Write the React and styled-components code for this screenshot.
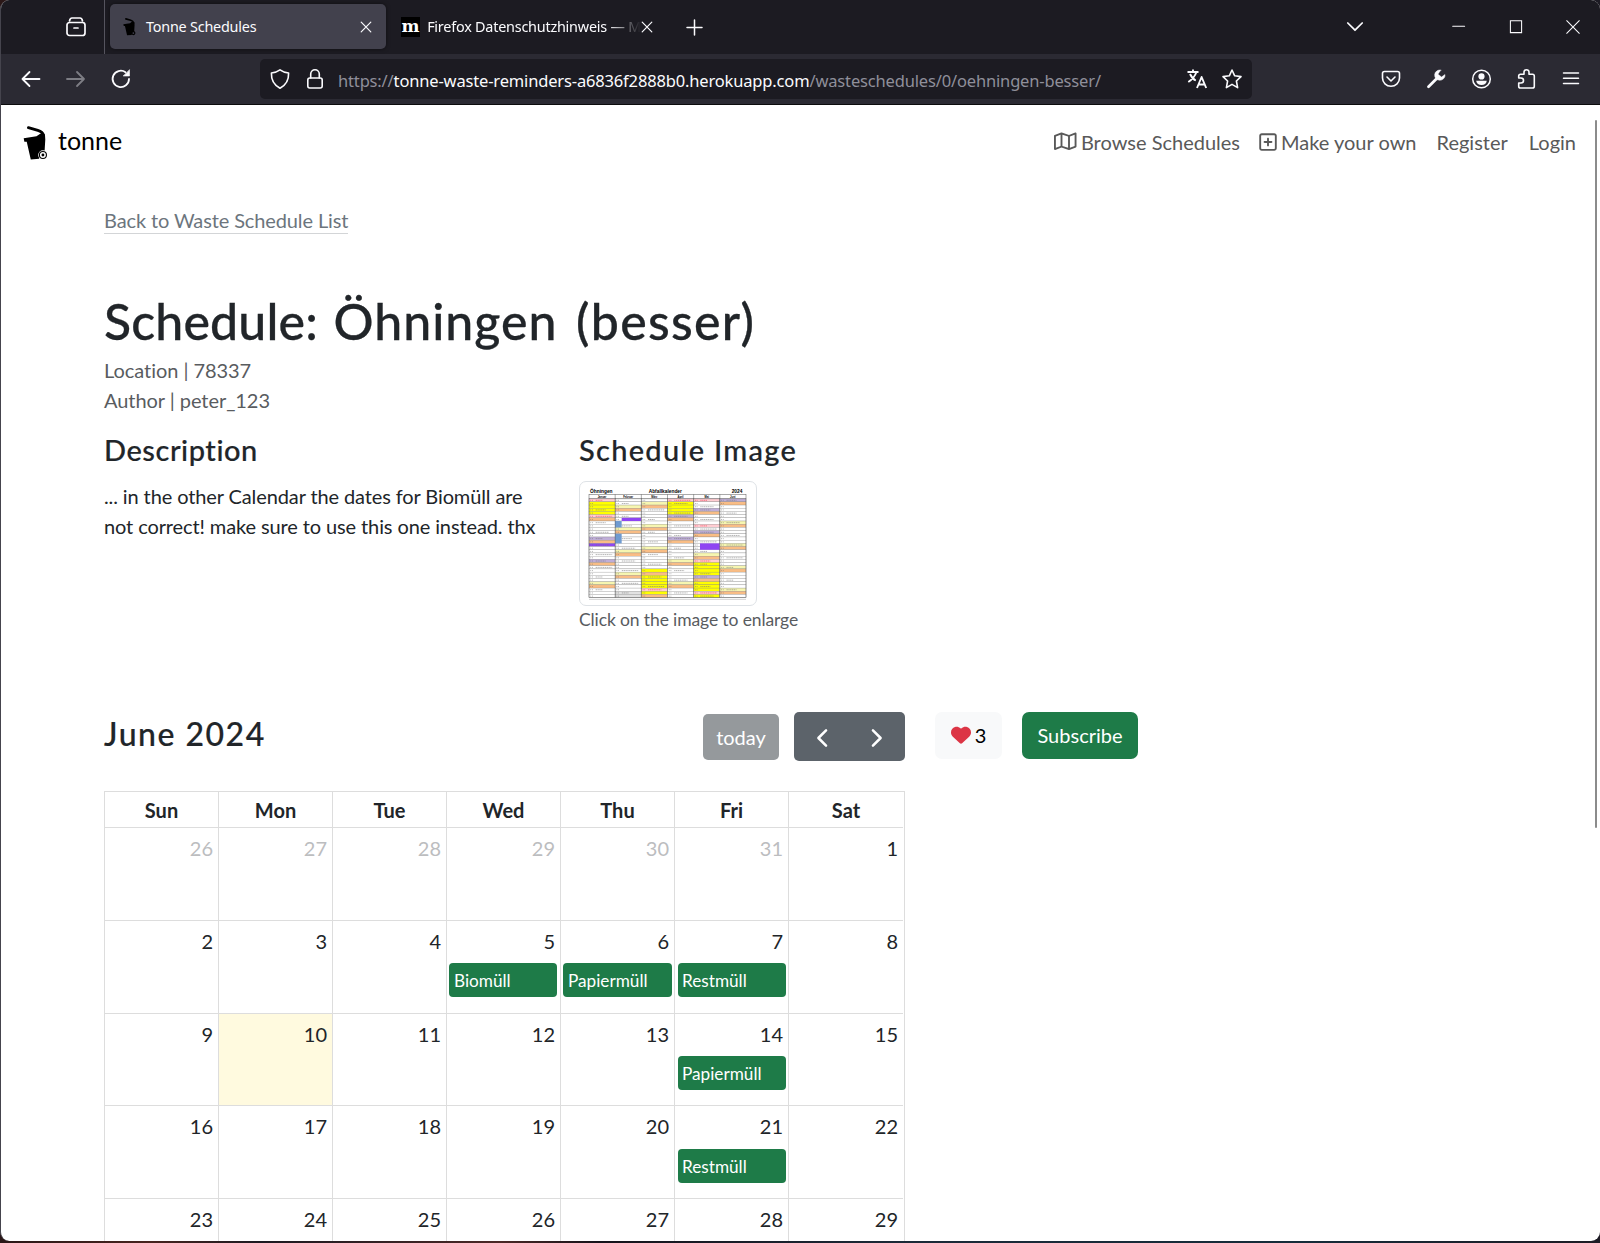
import React from "react";
import styled, { createGlobalStyle } from "styled-components";
import { FaRegMap, FaRegSquarePlus, FaHeart } from "react-icons/fa6";

const GlobalStyle = createGlobalStyle`
  * { box-sizing: border-box; }
  body {
    margin: 0;
    overflow: hidden;
    background: #16151b;
    font-family: Lato, "Liberation Sans", sans-serif;
    font-size: 20px;
    line-height: 30px;
    color: #212529;
  }
`;

const uiFont = `"Noto Sans", "Open Sans", sans-serif`;

const Desktop = styled.div`
  height: 1243px;
  padding: 0 0 2px;
  background: linear-gradient(90deg, #2a1717 0, #47241f 150px, #1c1a22 260px, #4b2826 500px, #15131b 600px, #1b2a38 900px, #152c3a 1300px, #1d1b24 1600px);
`;

const Window = styled.div`
  display: flex;
  flex-direction: column;
  height: 1241px;
  overflow: hidden;
  border-left: 1px solid #45444d;
  border-radius: 9px;
  background: #fff;
`;

const TabBar = styled.header`
  display: flex;
  flex: none;
  height: 54px;
  background: #1c1b22;
  color: #fbfbfe;
  font-family: ${uiFont};
`;

const FirefoxView = styled.div`
  display: flex;
  align-items: center;
  justify-content: flex-end;
  width: 104px;
  padding-right: 18px;
  border-right: 1px solid #55545e;
`;

const Tab = styled.div`
  display: flex;
  align-items: center;
  width: 276px;
  height: 45px;
  margin: 4px 0 0 5px;
  padding: 0 14px 0 ${(p) => (p.$active ? 13 : 10)}px;
  border-radius: 5px;
  background: ${(p) => (p.$active ? "#42414d" : "transparent")};
  box-shadow: ${(p) => (p.$active ? "0 0 4px rgba(0,0,0,.5)" : "none")};
`;

const TabTitle = styled.span`
  flex: 1;
  margin-left: ${(p) => p.$gap}px;
  padding-top: 1px;
  white-space: nowrap;
  font-size: 14.4px;
  letter-spacing: -0.22px;
  ${(p) => p.$fade && "mask-image: linear-gradient(90deg, #000 84%, transparent 100%);"}
`;

const Favicon = styled.span`
  width: 20px;
  height: 20px;
  background: #000;
  color: #fff;
  font: bold 17px/18px "DejaVu Serif", serif;
  text-align: center;
`;

const NewTab = styled.div`
  display: flex;
  align-items: center;
  margin-left: 20px;
`;

const WindowControls = styled.div`
  display: flex;
  align-items: center;
  gap: 43px;
  margin-left: auto;
  padding-right: 20px;
`;

const Toolbar = styled.div`
  display: flex;
  flex: none;
  align-items: center;
  height: 51px;
  border-bottom: 1px solid #0c0c0d;
  background: #2b2a33;
  color: #fbfbfe;
  font-family: ${uiFont};
`;

const HistoryButtons = styled.div`
  display: flex;
  gap: 25px;
  width: 259px;
  padding-left: 20px;
`;

const AddressField = styled.div`
  display: flex;
  align-items: center;
  width: 992px;
  height: 40px;
  padding: 0 10px;
  border-radius: 5px;
  background: #1c1b22;
`;

const Address = styled.span`
  flex: 1;
  margin-left: 13px;
  padding-top: 3px;
  color: #8f8f9a;
  font-size: 16.5px;
  letter-spacing: -0.16px;
  white-space: nowrap;
`;

const Host = styled.span`
  color: #fbfbfe;
`;

const ToolbarButtons = styled.div`
  display: flex;
  gap: 25px;
  margin-left: auto;
  padding-right: 19px;
`;

const Glyph = styled.svg`
  display: block;
  flex: none;
  margin-left: ${(p) => p.$left || 0}px;
  opacity: ${(p) => (p.$dim ? 0.4 : 1)};
  overflow: visible;
`;

const Page = styled.div`
  display: flex;
  flex: 1;
  min-height: 0;
  overflow: hidden;
`;

const Content = styled.div`
  flex: 1;
`;

const ScrollTrack = styled.div`
  width: 5px;
  padding-top: 15px;
`;

const ScrollThumb = styled.div`
  width: 2px;
  height: 708px;
  border-radius: 1px;
  background: #8b8b8b;
`;

const Navbar = styled.nav`
  display: flex;
  align-items: center;
  justify-content: space-between;
  height: 76px;
  padding: 0 19px 2px 22px;
`;

const Brand = styled.div`
  display: flex;
  align-items: center;
  gap: 10px;
  color: #000;
  font-size: 25px;
  svg { margin-top: 2px; }
`;

const BrandName = styled.span`
  padding-bottom: 4px;
`;

const NavLinks = styled.div`
  display: flex;
  gap: 21px;
  color: #595959;
`;

const NavLink = styled.a`
  display: flex;
  align-items: center;
  gap: ${(p) => p.$gap || 4}px;
  margin-left: ${(p) => p.$left || 0}px;
  svg { margin-top: -1px; }
`;

const Container = styled.main`
  padding: 24px 0 0 103px;
`;

const BackLink = styled.a`
  display: inline-block;
  height: 28px;
  line-height: 28px;
  border-bottom: 1px solid #d3d5d7;
  color: #6c757d;
  letter-spacing: -0.12px;
`;

const Title = styled.h1`
  margin: 56px 0 4px;
  font-size: 50px;
  line-height: 60px;
  font-weight: 500;
  -webkit-text-stroke: 0.3px currentColor;
`;

const Word = styled.span`
  margin-right: ${(p) => p.$after || 0}px;
  letter-spacing: ${(p) => p.$spacing}px;
`;

const Meta = styled.p`
  margin: 0;
  color: #595c5f;
  letter-spacing: -0.05px;
`;

const Details = styled.section`
  display: flex;
  height: 297px;
  padding-top: 15px;
`;

const Column = styled.div`
  width: 475px;
`;

const SubTitle = styled.h2`
  margin: 0 0 12px;
  font-size: 29px;
  line-height: 39px;
  font-weight: 500;
  letter-spacing: ${(p) => p.$spacing}px;
  -webkit-text-stroke: 0.2px currentColor;
`;

const Description = styled.p`
  width: 440px;
  margin: 0;
  letter-spacing: -0.11px;
`;

const Thumbnail = styled.div`
  width: 178px;
  height: 125px;
  padding: 6px 9px;
  border: 1px solid #dee2e6;
  border-radius: 7px;
`;

const Caption = styled.p`
  margin: 0;
  color: #595c5f;
  font-size: 17.5px;
  line-height: 27px;
  letter-spacing: -0.12px;
`;

const CalendarHeader = styled.section`
  display: flex;
  align-items: flex-start;
  height: 79px;
`;

const Month = styled.h2`
  flex: none;
  width: 599px;
  margin: 2px 0 0;
  font-size: 32px;
  line-height: 40px;
  font-weight: 500;
  letter-spacing: 1.5px;
  -webkit-text-stroke: 0.2px currentColor;
`;

const Button = styled.button`
  display: flex;
  align-items: center;
  justify-content: center;
  gap: 4px;
  width: ${(p) => p.$width}px;
  height: 47px;
  margin: 0 0 0 ${(p) => p.$left || 0}px;
  padding: 0 0 1px;
  border: 0;
  border-radius: 7px;
  background: ${(p) => p.$bg};
  color: ${(p) => p.$color || "#fff"};
  font: 20px/30px Lato, sans-serif;
`;

const TodayButton = styled(Button)`
  height: 46px;
  margin-top: 2px;
  padding: 0;
  border-radius: 5px;
`;

const Pager = styled(Button)`
  gap: 37px;
  height: 49px;
  padding: 3px 0 0;
  border-radius: 5px;
`;

const Calendar = styled.div`
  width: 801px;
  padding-right: 1px;
  border: 1px solid #ddd;
`;

const Week = styled.div`
  display: grid;
  grid-template-columns: repeat(6, 114px) 1fr;
  height: ${(p) => p.$height}px;
  border-bottom: 1px solid #ddd;
`;

const DayName = styled.div`
  padding-top: 3px;
  border-right: 1px solid #ddd;
  font-weight: 700;
  text-align: center;
  &:last-child { border-right: 0; }
`;

const Day = styled.div`
  padding: 5px 2px 0;
  border-right: 1px solid #ddd;
  background: ${(p) => (p.$today ? "#fffadf" : "#fff")};
  &:last-child { border-right: 0; }
`;

const DayNumber = styled.div`
  padding-right: 3px;
  color: ${(p) => (p.$muted ? "#bcbdbf" : "#212529")};
  text-align: right;
`;

const Event = styled.div`
  width: ${(p) => p.$width}px;
  height: 34px;
  margin: ${(p) => p.$top}px 0 0 ${(p) => (p.$late ? 1 : 0)}px;
  padding-left: ${(p) => (p.$late ? 4 : 5)}px;
  border-radius: 4px;
  background: #1e7b48;
  color: #fff;
  font-size: 17.2px;
  line-height: 35px;
`;

const Bin = ({ width }) => (
  <Glyph width={width} height={width * 1.35} viewBox="68 52 74 100">
    <path d="M84 57 L112 65 Q126 69 129 80" fill="none" stroke="#000" strokeWidth="8.5" strokeLinecap="round" />
    <path d="M70 88 L108 82 L120 74 L133 77 L134 92 L132 126 Q114 128 116 149 L91 151 L79 99 L72 99 Z" />
    <circle cx="127" cy="138" r="14" fill="#fff" />
    <circle cx="127" cy="138" r="12" fill="#000" />
    <circle cx="127" cy="138" r="6.5" fill="none" stroke="#fff" strokeWidth="4.5" />
  </Glyph>
);

const TabBin = () => (
  <Glyph width={13} height={17.5} viewBox="68 52 74 100">
    <path d="M84 57 L112 65 Q126 69 129 80" fill="none" stroke="#000" strokeWidth="9" strokeLinecap="round" />
    <path d="M70 88 L108 82 L118 73 L133 77 L134 92 L132 126 L116 149 L91 151 L79 98 L72 98 Z" />
    <circle cx="127" cy="138" r="12" />
    <circle cx="127" cy="138" r="5" fill="#42414d" />
  </Glyph>
);

const Line = ({ size = 20, children, ...rest }) => (
  <Glyph width={size} height={size} viewBox="0 0 20 20" fill="none" stroke="currentColor" strokeWidth="1.6" strokeLinecap="round" strokeLinejoin="round" {...rest}>
    {children}
  </Glyph>
);

const CloseIcon = () => (
  <Line size={12}><path d="M2 2 L18 18 M18 2 L2 18" strokeWidth="2" /></Line>
);

const RED = "#ffcdd2", YEL = "#ffff00", ORA = "#f9bd85", PAL = "#f6f6b0", LIL = "#bfaed8", VIO = "#8f45f2", GRY = "#e2e2e2";
const months = [
  ["Januar", { 0: RED, 1: YEL, 2: YEL, 3: YEL, 4: YEL, 5: RED, 6: ORA, 12: LIL, 13: ORA, 14: VIO, 19: LIL, 20: ORA, 26: PAL, 27: ORA }],
  ["Februar", { 2: PAL, 3: ORA, 9: PAL, 10: ORA, 16: PAL, 17: ORA, 23: PAL, 24: ORA, 29: GRY, 30: GRY }],
  ["März", { 1: PAL, 2: ORA, 8: PAL, 9: ORA, 15: PAL, 16: ORA, 22: YEL, 23: ORA, 24: YEL, 25: YEL, 26: YEL, 27: YEL, 28: RED, 29: YEL, 30: ORA }],
  ["April", { 0: RED, 1: YEL, 2: YEL, 3: YEL, 4: YEL, 5: LIL, 6: ORA, 12: LIL, 13: ORA, 19: PAL, 20: ORA, 26: PAL, 27: ORA }],
  ["Mai", { 0: RED, 3: LIL, 4: ORA, 8: RED, 10: LIL, 11: ORA, 17: PAL, 18: ORA, 19: RED, 20: YEL, 21: YEL, 22: YEL, 23: YEL, 24: LIL, 25: ORA, 26: YEL, 27: YEL, 28: YEL, 29: RED, 30: YEL }],
  ["Juni", { 0: LIL, 1: ORA, 7: PAL, 8: ORA, 14: PAL, 15: ORA, 21: PAL, 22: ORA, 28: PAL, 29: ORA }],
];
const blocks = [
  [155, 6, 58, 1, VIO], [135, 7, 20, 2, "#6f9bd1"], [135, 11, 20, 3, "#6f9bd1"], [390, 14, 59, 2, VIO],
];
const ROW = 9.58;

const WastePlan = () => (
  <Glyph width="158" height="112" viewBox="57 51 474 336" fontFamily="Liberation Sans, sans-serif">
    <g fontWeight="bold" fontSize="14.5">
      <text x="60" y="65">Öhningen</text>
      <text x="236" y="65">Abfallkalender</text>
      <text x="485" y="65">2024</text>
    </g>
    {months.map(([name, days], c) => {
      const x = 57 + c * 78.5;
      return (
        <g key={name}>
          <text x={x + 39} y="80" fontSize="8" fontWeight="bold" textAnchor="middle">{name}</text>
          {Array.from({ length: 31 }, (_, r) => {
            const y = 83 + r * ROW;
            const marked = (r * 5 + c * 3) % 7 < 2 || days[r] === RED || days[r] === LIL;
            const ink = days[r] === RED ? "#f0304a" : "#777";
            return (
              <g key={r}>
                <rect x={x} y={y} width="78.5" height={ROW} fill={days[r] || "#fff"} stroke="#777" strokeWidth="0.8" />
                <path d={`M${x + 4} ${y + 5} h9`} stroke={ink} strokeWidth="3" strokeDasharray="2.5 2.5" opacity=".6" />
                {marked && <path d={`M${x + 20} ${y + 5} h${20 + ((r * 7 + c) % 4) * 10}`} stroke={ink} strokeWidth="3" strokeDasharray="4 1.5" opacity=".55" />}
              </g>
            );
          })}
        </g>
      );
    })}
    {blocks.map(([x, r, w, h, fill]) => (
      <rect key={`${x}-${r}`} x={x} y={83 + r * ROW} width={w} height={h * ROW} fill={fill} />
    ))}
    <g stroke="#555" strokeWidth="1.5" fill="none">
      <rect x="57" y="70" width="471" height="310" />
      {[1, 2, 3, 4, 5].map((c) => <path key={c} d={`M${57 + c * 78.5} 70 V380`} />)}
      <path d="M57 83 H528" />
    </g>
    <path d="M57 385 H528" stroke="#bbb" strokeWidth="2" />
  </Glyph>
);

const names = ["Sun", "Mon", "Tue", "Wed", "Thu", "Fri", "Sat"];
const weeks = [
  { height: 93, days: [26, 27, 28, 29, 30, 31, 1] },
  { height: 93, days: [2, 3, 4, 5, 6, 7, 8] },
  { height: 92, days: [9, 10, 11, 12, 13, 14, 15] },
  { height: 93, days: [16, 17, 18, 19, 20, 21, 22] },
  { height: 93, days: [23, 24, 25, 26, 27, 28, 29] },
];
const events = { 5: "Biomüll", 6: "Papiermüll", 7: "Restmüll", 14: "Papiermüll", 21: "Restmüll" };

export default function App() {
  return (
    <Desktop>
      <GlobalStyle />
      <Window>
        <TabBar>
          <FirefoxView>
            <Line strokeWidth="1.7">
              <rect x="1" y="5.5" width="18" height="13" rx="2.5" />
              <path d="M3.5 4 Q4 1 6 1 H14 Q16 1 16.5 4 M8 11 H12" />
            </Line>
          </FirefoxView>
          <Tab $active>
            <TabBin />
            <TabTitle $gap={10}>Tonne Schedules</TabTitle>
            <CloseIcon />
          </Tab>
          <Tab>
            <Favicon>m</Favicon>
            <TabTitle $gap={7} $fade>Firefox Datenschutzhinweis — M</TabTitle>
            <CloseIcon />
          </Tab>
          <NewTab><Line size={15}><path d="M10 0 V20 M0 10 H20" strokeWidth="2" /></Line></NewTab>
          <WindowControls>
            <Line size={16}><path d="M1 5 L10 14 L19 5" strokeWidth="2.2" /></Line>
            <Line size={14} $left={46}><path d="M1 9 H18" strokeWidth="1.5" /></Line>
            <Line size={14}><path d="M2 1 H18 V18 H2 Z" strokeWidth="1.5" strokeLinejoin="miter" /></Line>
            <Line size={14}><path d="M1 1 L19 19 M19 1 L1 19" strokeWidth="1.5" /></Line>
          </WindowControls>
        </TabBar>
        <Toolbar>
          <HistoryButtons>
            <Line><path d="M18.5 10 H1.5 M8.5 3 L1.5 10 L8.5 17" strokeWidth="1.8" /></Line>
            <Line $dim><path d="M1 10 H18 M11 3 L18 10 L11 17" strokeWidth="1.8" /></Line>
            <Line>
              <path d="M18 10 A8.2 8.2 0 1 1 14.5 3.2" strokeWidth="1.8" />
              <path d="M18.5 1 V7 H12.5 Z" fill="currentColor" strokeWidth=".6" />
            </Line>
          </HistoryButtons>
          <AddressField>
            <Line><path d="M10 .8 Q13.5 3.3 18.6 4 Q19 14.5 10 19.2 Q1 14.5 1.4 4 Q6.5 3.3 10 .8 Z" /></Line>
            <Line $left={15}>
              <rect x="2.8" y="9" width="14.4" height="10" rx="2" />
              <path d="M5.7 9 V5 A4.3 4.3 0 0 1 14.3 5 V9" />
            </Line>
            <Address>https://<Host>tonne-waste-reminders-a6836f2888b0.herokuapp.com</Host>/wasteschedules/0/oehningen-besser/</Address>
            <Line>
              <path d="M.5 3 H11.5 M6 .5 V3 M9.5 3 Q7 9.5 1.3 13 M3 5 Q5.5 10 8.8 11.5 M10 19 L14.6 8 L19.2 19 M11.7 15.5 H17.5" strokeWidth="1.9" strokeLinecap="butt" />
            </Line>
            <Line $left={15}><path d="M10 1 L12.7 6.8 L19 7.6 L14.4 12 L15.6 18.6 L10 15.4 L4.4 18.6 L5.6 12 L1 7.6 L7.3 6.8 Z" /></Line>
          </AddressField>
          <ToolbarButtons>
            <Line>
              <path d="M3.5 2.5 H16.5 Q18.5 2.5 18.5 4.5 V9 A8.5 8.3 0 0 1 1.5 9 V4.5 Q1.5 2.5 3.5 2.5 Z M6 8 L10 12 L14 8" />
            </Line>
            <Line>
              <path d="M2.5 17.8 L11 9.3" strokeWidth="2.8" />
              <path d="M14.8 1 A5.2 5.2 0 1 0 19 5.6 L15.5 8 L12 5.2 Z" fill="currentColor" strokeWidth=".5" />
            </Line>
            <Line>
              <circle cx="10.5" cy="10" r="8.8" strokeWidth="1.5" />
              <circle cx="10.5" cy="7.4" r="3.1" fill="currentColor" stroke="none" />
              <path d="M5.2 11.7 H15.8 Q15 16 10.5 16 Q6 16 5.2 11.7 Z" fill="currentColor" stroke="none" />
            </Line>
            <Line>
              <path d="M2.7 9 V7 Q2.7 5.2 4.5 5.2 H8 V3.2 A2.5 2.5 0 0 1 13 3.2 V5.2 H16.5 Q18.3 5.2 18.3 7 V17.2 Q18.3 19 16.5 19 H4.5 Q2.7 19 2.7 17.2 V14 H5 A2.5 2.5 0 0 0 5 9 Z" />
            </Line>
            <Line><path d="M2.5 4 H17.5 M2.5 9.3 H17.5 M2.5 14.6 H17.5" strokeWidth="1.5" /></Line>
          </ToolbarButtons>
        </Toolbar>
        <Page>
          <Content>
            <Navbar>
              <Brand><Bin width={25} /><BrandName>tonne</BrandName></Brand>
              <NavLinks>
                <NavLink><FaRegMap size={22.5} />Browse Schedules</NavLink>
                <NavLink $gap={2.5} $left={-2.5}><FaRegSquarePlus size={20} />Make your own</NavLink>
                <NavLink $left={-1}>Register</NavLink>
                <NavLink>Login</NavLink>
              </NavLinks>
            </Navbar>
            <Container>
              <BackLink>Back to Waste Schedule List</BackLink>
              <Title>
                <Word $spacing={0.15} $after={3}>Schedule:</Word> <Word $spacing={1} $after={6}>Öhningen</Word> <Word $spacing={1.3}>(besser)</Word>
              </Title>
              <Meta>Location | 78337</Meta>
              <Meta>Author | peter_123</Meta>
              <Details>
                <Column>
                  <SubTitle $spacing={0.55}>Description</SubTitle>
                  <Description>... in the other Calendar the dates for Biomüll are not correct! make sure to use this one instead. thx</Description>
                </Column>
                <Column>
                  <SubTitle $spacing={1.3}>Schedule Image</SubTitle>
                  <Thumbnail><WastePlan /></Thumbnail>
                  <Caption>Click on the image to enlarge</Caption>
                </Column>
              </Details>
              <CalendarHeader>
                <Month>June 2024</Month>
                <TodayButton $width={76} $bg="#95999c">today</TodayButton>
                <Pager $width={111} $bg="#5c636a" $left={15}>
                  <Line size={18}><path d="M14.5 1.5 L6 10 L14.5 18.5" strokeWidth="2.8" /></Line>
                  <Line size={18}><path d="M5.5 1.5 L14 10 L5.5 18.5" strokeWidth="2.8" /></Line>
                </Pager>
                <Button $width={67} $bg="#f8f9fa" $color="#000" $left={30}><FaHeart size={20} color="#dc3545" />3</Button>
                <Button $width={116} $bg="#1e7b48" $left={20}>Subscribe</Button>
              </CalendarHeader>
              <Calendar>
                <Week $height={36}>
                  {names.map((name) => <DayName key={name}>{name}</DayName>)}
                </Week>
                {weeks.map(({ height, days }, w) => (
                  <Week key={w} $height={height}>
                    {days.map((day) => (
                      <Day key={day} $today={w === 2 && day === 10}>
                        <DayNumber $muted={w === 0 && day > 20}>{day}</DayNumber>
                        {w > 0 && events[day] && (
                          <Event $late={day % 7 === 0} $top={w === 3 ? 8 : 7} $width={day === 6 ? 109 : 108}>{events[day]}</Event>
                        )}
                      </Day>
                    ))}
                  </Week>
                ))}
              </Calendar>
            </Container>
          </Content>
          <ScrollTrack><ScrollThumb /></ScrollTrack>
        </Page>
      </Window>
    </Desktop>
  );
}
